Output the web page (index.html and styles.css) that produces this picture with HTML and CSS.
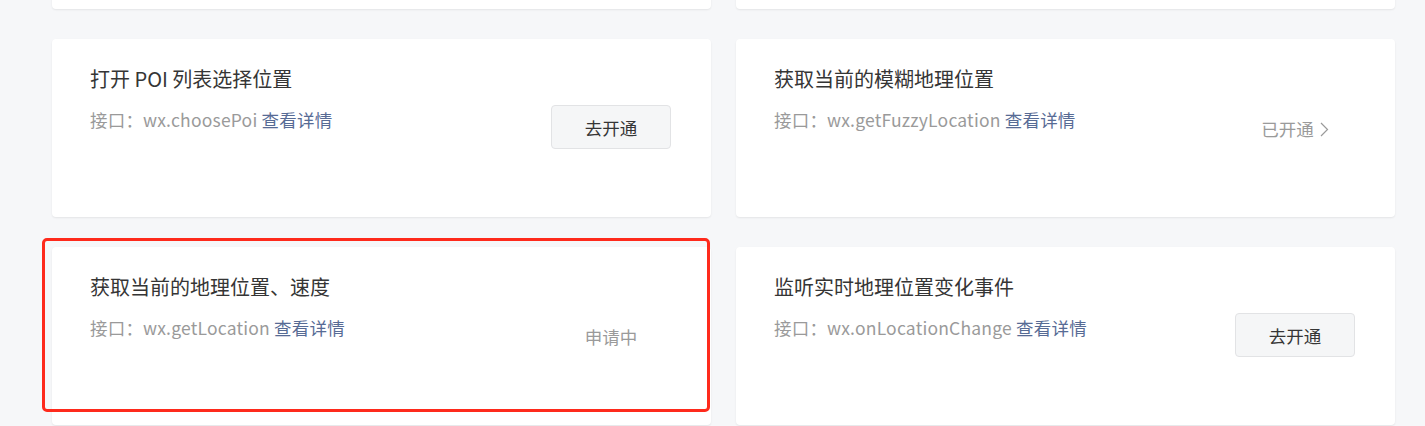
FILE: index.html
```html
<!DOCTYPE html>
<html lang="zh-CN">

<head>
    <meta charset="UTF-8">
    <meta name="viewport" content="width=device-width, initial-scale=1.0">
    <title>接口权限</title>
    <link rel="stylesheet" href="styles.css">
</head>

<body>
    <div class="list">
        <!-- row scrolled out of view -->
        <div class="card"></div>
        <div class="card"></div>

        <div class="card">
            <div class="info">
                <h4>打开 POI 列表选择位置</h4>
                <p>接口：wx.choosePoi <a href="#">查看详情</a></p>
            </div>
            <div class="act"><button type="button">去开通</button></div>
        </div>
        <div class="card">
            <div class="info">
                <h4>获取当前的模糊地理位置</h4>
                <p>接口：wx.getFuzzyLocation <a href="#">查看详情</a></p>
            </div>
            <div class="act">
                <span class="st">已开通
                    <svg width="9" height="15" viewBox="0 0 9 15"><path d="M1 1l6.5 6.5L1 14" fill="none" stroke="#9a9a9a" stroke-width="1.2"/></svg>
                </span>
            </div>
        </div>

        <div class="card">
            <div class="info">
                <h4>获取当前的地理位置、速度</h4>
                <p>接口：wx.getLocation <a href="#">查看详情</a></p>
            </div>
            <div class="act"><span class="st">申请中</span></div>
            <div class="mark"></div>
        </div>
        <div class="card">
            <div class="info">
                <h4>监听实时地理位置变化事件</h4>
                <p>接口：wx.onLocationChange <a href="#">查看详情</a></p>
            </div>
            <div class="act"><button type="button">去开通</button></div>
        </div>
    </div>
</body>

</html>
```

FILE: styles.css
```css
html {
    height: 100%;
}

body {
    margin: 0;
    height: 100%;
    overflow: hidden;
    background-color: #f6f7f9;
    font-family: "Noto Sans CJK SC", "Noto Sans", sans-serif;
    color: #353535;
}

.list {
    display: grid;
    grid-template-columns: 1fr 1fr;
    gap: 30px 25px;
    padding: 0 30px 0 52px;
    margin-top: -169px;
}

.card {
    position: relative;
    display: flex;
    align-items: center;
    height: 178px;
    padding: 0 40px 0 38px;
    box-sizing: border-box;
    background-color: #fff;
    border-radius: 4px;
    box-shadow: 0 1px 2px rgba(0, 0, 0, .08);
}

.info {
    flex-grow: 1;
    align-self: flex-start;
    padding-top: 26px;
}

h4 {
    margin: 0;
    font-size: 20px;
    font-weight: 400;
    line-height: 28px;
}

p {
    margin: 15px 0 0;
    font-size: 17.5px;
    line-height: 24px;
    letter-spacing: .2px;
    color: #9a9a9a;
}

a {
    color: #576b95;
    text-decoration: none;
}

.act {
    width: 120px;
    text-align: center;
}

button {
    width: 120px;
    height: 44px;
    margin-top: -2px;
    font-family: inherit;
    font-size: 17.5px;
    color: #353535;
    background-color: #f5f6f7;
    border: 1px solid #e2e3e5;
    border-radius: 4px;
    cursor: pointer;
}

.st {
    font-size: 17.5px;
    color: #9a9a9a;
}

.st svg {
    margin-left: 2px;
    vertical-align: -1px;
}

.mark {
    position: absolute;
    top: -9px;
    left: -10px;
    right: 1px;
    bottom: 13px;
    border: 3px solid #fe2a1c;
    border-radius: 5px;
    pointer-events: none;
}
```
